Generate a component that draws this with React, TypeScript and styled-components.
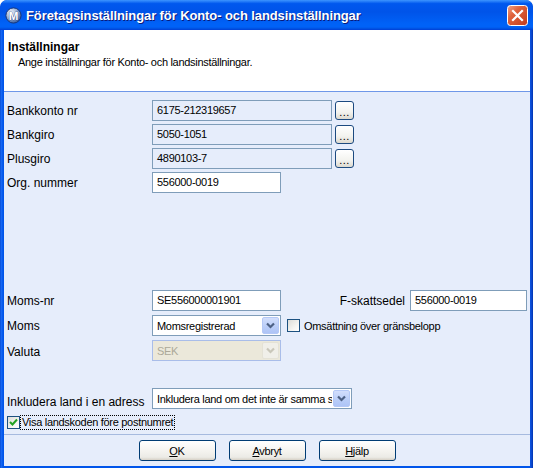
import React from 'react'
import styled, { createGlobalStyle } from 'styled-components'

const GlobalStyle = createGlobalStyle`
  html, body {
    margin: 0;
    padding: 0;
    background: #ffffff;
  }
  body {
    font-family: 'Liberation Sans', Arial, sans-serif;
    font-size: 11px;
    letter-spacing: -0.3px;
    color: #000;
  }
`

const Window = styled.div`
  width: 533px;
  height: 468px;
  display: flex;
  flex-direction: column;
  overflow: hidden;
  border-radius: 7px 7px 0 0;
  background: linear-gradient(90deg, #0040c8 0px, #1c6cf5 1px, #0055ea 3px, #0055ea 529px, #0f4fd8 531px, #0033b0 533px);
`

const TitleBar = styled.div`
  height: 30px;
  flex: none;
  display: flex;
  align-items: center;
  gap: 4px;
  padding: 0 5px 0 5px;
  border-radius: 7px 7px 0 0;
  background: linear-gradient(
    180deg,
    #3d95ff 0%,
    #0058ee 12%,
    #0054e9 40%,
    #0062f7 80%,
    #0062f7 90%,
    #0050e0 96%,
    #003dd7 100%
  );
`

const Title = styled.div`
  flex: 1;
  color: #ffffff;
  font-weight: bold;
  font-size: 13px;
  letter-spacing: -0.1px;
  text-shadow: 1px 1px 0 #0a1a7a;
  white-space: nowrap;
`

const Frame = styled.div`
  flex: 1;
  display: flex;
  flex-direction: column;
  margin: 0 3px 2px 4px;
  background: #e6edfb;
`

const Header = styled.div`
  height: 51px;
  flex: none;
  background: #ffffff;
  border-bottom: 1px solid #6f97e8;
  padding: 10px 0 0 4px;
  box-sizing: content-box;
  line-height: 15px;
`

const HeaderTitle = styled.div`
  font-weight: bold;
  font-size: 12px;
  letter-spacing: 0;
`

const HeaderText = styled.div`
  padding-left: 10px;
`

const Body = styled.div`
  flex: 1;
  display: flex;
  flex-direction: column;
  padding: 8px 3px 0 3px;
`

const Group = styled.div<{ $gap: number; $top?: number }>`
  display: flex;
  flex-direction: column;
  gap: ${(p) => p.$gap}px;
  margin-top: ${(p) => p.$top ?? 0}px;
`

const Row = styled.div<{ $top?: number }>`
  display: flex;
  align-items: center;
  height: 21px;
  margin-top: ${(p) => p.$top ?? 0}px;
`

const Label = styled.div<{ $drop?: number }>`
  width: 145px;
  flex: none;
  font-size: 12px;
  letter-spacing: 0;
  white-space: nowrap;
  padding-top: ${(p) => p.$drop ?? 0}px;
`

const SideLabel = styled.div`
  margin-left: auto;
  margin-right: 5px;
  font-size: 12px;
  letter-spacing: 0;
  white-space: nowrap;
`

const Input = styled.div<{ $width: number; $readOnly?: boolean }>`
  width: ${(p) => p.$width}px;
  height: 21px;
  box-sizing: border-box;
  flex: none;
  border: 1px solid #7f9db9;
  background: ${(p) => (p.$readOnly ? 'transparent' : '#ffffff')};
  padding: 0 4px;
  line-height: 19px;
  white-space: nowrap;
  overflow: hidden;
`

const BrowseButton = styled.div`
  width: 19px;
  height: 19px;
  box-sizing: border-box;
  margin-left: 3px;
  flex: none;
  border: 1px solid #1c4a80;
  border-radius: 3px;
  background: linear-gradient(180deg, #ffffff 0%, #f3f3ef 60%, #dcd9cf 100%);
  display: flex;
  align-items: flex-end;
  justify-content: center;
  font-size: 11px;
  line-height: 13px;
  letter-spacing: 0.5px;
`

const Select = styled.div<{ $width: number; $disabled?: boolean }>`
  width: ${(p) => p.$width}px;
  height: 21px;
  box-sizing: border-box;
  flex: none;
  display: flex;
  align-items: center;
  border: 1px solid ${(p) => (p.$disabled ? '#a9bde9' : '#7f9db9')};
  background: ${(p) => (p.$disabled ? '#ebe8da' : '#ffffff')};
  color: ${(p) => (p.$disabled ? '#aca899' : '#000000')};
  padding-left: 4px;
`

const SelectText = styled.div`
  flex: 1;
  white-space: nowrap;
  overflow: hidden;
`

const DropButton = styled.div<{ $disabled?: boolean }>`
  width: 17px;
  height: 17px;
  box-sizing: border-box;
  flex: none;
  margin: 1px;
  border: 1px solid ${(p) => (p.$disabled ? '#e4e2d6' : '#b4c8f6')};
  border-radius: 2px;
  background: ${(p) =>
    p.$disabled
      ? '#f0efe9'
      : 'linear-gradient(180deg, #d2defc 0%, #b9cdf8 60%, #aec4f6 100%)'};
  display: flex;
  align-items: center;
  justify-content: center;
`

const CheckRow = styled.label<{ $top?: number }>`
  display: flex;
  align-items: center;
  height: 15px;
  margin-top: ${(p) => p.$top ?? 0}px;
`

const InlineCheck = styled.label`
  display: flex;
  align-items: center;
  gap: 4px;
  margin-left: 6px;
  white-space: nowrap;
`

const Box = styled.div`
  width: 13px;
  height: 13px;
  box-sizing: border-box;
  flex: none;
  border: 1px solid #1c5180;
  background: linear-gradient(135deg, #dcdcd7 0%, #f4f4f0 60%, #ffffff 100%);
  display: flex;
  align-items: center;
  justify-content: center;
`

const FocusText = styled.span`
  border: 1px dotted #000;
  padding: 0 1px;
  line-height: 13px;
  white-space: nowrap;
`

const Footer = styled.div`
  flex: none;
  height: 26px;
  border-top: 1px solid #a6badf;
  display: flex;
  justify-content: center;
  align-items: flex-start;
  gap: 13px;
  padding-top: 5px;
  box-sizing: content-box;
`

const Button = styled.div`
  width: 77px;
  height: 21px;
  box-sizing: border-box;
  border: 1px solid #003c74;
  border-radius: 3px;
  background: linear-gradient(180deg, #ffffff 0%, #f5f4f0 50%, #ecebe6 85%, #d6d0c5 100%);
  display: flex;
  align-items: center;
  justify-content: center;
`

const Chevron = ({ color }: { color: string }) => (
  <svg width="9" height="7" viewBox="0 0 9 7">
    <polyline points="1,1.5 4.5,5 8,1.5" fill="none" stroke={color} strokeWidth="2.2" />
  </svg>
)

const Check = () => (
  <svg width="9" height="9" viewBox="0 0 9 9">
    <polyline points="1,4 3.5,6.5 8,1.5" fill="none" stroke="#21a121" strokeWidth="2" />
  </svg>
)

const AppIcon = () => (
  <svg width="17" height="17" viewBox="0 0 17 17">
    <defs>
      <radialGradient id="ic" cx="0.35" cy="0.3" r="0.75">
        <stop offset="0" stopColor="#f2f5fa" />
        <stop offset="0.5" stopColor="#9db3d6" />
        <stop offset="1" stopColor="#34589a" />
      </radialGradient>
    </defs>
    <circle cx="8.5" cy="8.5" r="7.6" fill="url(#ic)" stroke="#163273" strokeWidth="0.9" />
    <text
      x="8.5"
      y="12.6"
      textAnchor="middle"
      fontFamily="Liberation Sans, Arial, sans-serif"
      fontWeight="bold"
      fontSize="11.5"
      fill="#ffffff"
      stroke="#1b3576"
      strokeWidth="0.6"
      paintOrder="stroke"
    >
      M
    </text>
  </svg>
)

const CloseIcon = () => (
  <svg width="21" height="21" viewBox="0 0 21 21">
    <defs>
      <linearGradient id="cl" x1="0" y1="0" x2="1" y2="1">
        <stop offset="0" stopColor="#f0a58a" />
        <stop offset="0.35" stopColor="#e0633c" />
        <stop offset="1" stopColor="#c23a1a" />
      </linearGradient>
    </defs>
    <rect x="0.5" y="0.5" width="20" height="20" rx="3" fill="url(#cl)" stroke="#ffffff" />
    <path d="M6 6 L15 15 M15 6 L6 15" stroke="#ffffff" strokeWidth="2.2" strokeLinecap="square" />
  </svg>
)

const browseRows = [
  { label: 'Bankkonto nr', value: '6175-212319657' },
  { label: 'Bankgiro', value: '5050-1051' },
  { label: 'Plusgiro', value: '4890103-7' },
]

export default function App() {
  return (
    <>
      <GlobalStyle />
      <Window>
        <TitleBar>
          <AppIcon />
          <Title>Företagsinställningar för Konto- och landsinställningar</Title>
          <CloseIcon />
        </TitleBar>
        <Frame>
          <Header>
            <HeaderTitle>Inställningar</HeaderTitle>
            <HeaderText>Ange inställningar för Konto- och landsinställningar.</HeaderText>
          </Header>
          <Body>
            <Group $gap={3}>
              {browseRows.map((r) => (
                <Row key={r.label}>
                  <Label>{r.label}</Label>
                  <Input $width={180} $readOnly>
                    {r.value}
                  </Input>
                  <BrowseButton>...</BrowseButton>
                </Row>
              ))}
              <Row>
                <Label>Org. nummer</Label>
                <Input $width={129}>556000-0019</Input>
              </Row>
            </Group>

            <Group $gap={4} $top={97}>
              <Row>
                <Label>Moms-nr</Label>
                <Input $width={129}>SE556000001901</Input>
                <SideLabel>F-skattsedel</SideLabel>
                <Input $width={117}>556000-0019</Input>
              </Row>
              <Row>
                <Label>Moms</Label>
                <Select $width={129}>
                  <SelectText>Momsregistrerad</SelectText>
                  <DropButton>
                    <Chevron color="#4d6185" />
                  </DropButton>
                </Select>
                <InlineCheck>
                  <Box />
                  <span>Omsättning över gränsbelopp</span>
                </InlineCheck>
              </Row>
              <Row>
                <Label $drop={3}>Valuta</Label>
                <Select $width={129} $disabled>
                  <SelectText>SEK</SelectText>
                  <DropButton $disabled>
                    <Chevron color="#c9c7ba" />
                  </DropButton>
                </Select>
              </Row>
            </Group>

            <Row $top={27}>
              <Label $drop={7}>Inkludera land i en adress</Label>
              <Select $width={200}>
                <SelectText>Inkludera land om det inte är samma som företagets land</SelectText>
                <DropButton>
                  <Chevron color="#4d6185" />
                </DropButton>
              </Select>
            </Row>

            <CheckRow $top={6}>
              <Box>
                <Check />
              </Box>
              <FocusText>Visa landskoden före postnumret</FocusText>
            </CheckRow>
          </Body>
          <Footer>
            <Button>
              <span>
                <u>O</u>K
              </span>
            </Button>
            <Button>
              <span>
                <u>A</u>vbryt
              </span>
            </Button>
            <Button>
              <span>
                <u>H</u>jälp
              </span>
            </Button>
          </Footer>
        </Frame>
      </Window>
    </>
  )
}
